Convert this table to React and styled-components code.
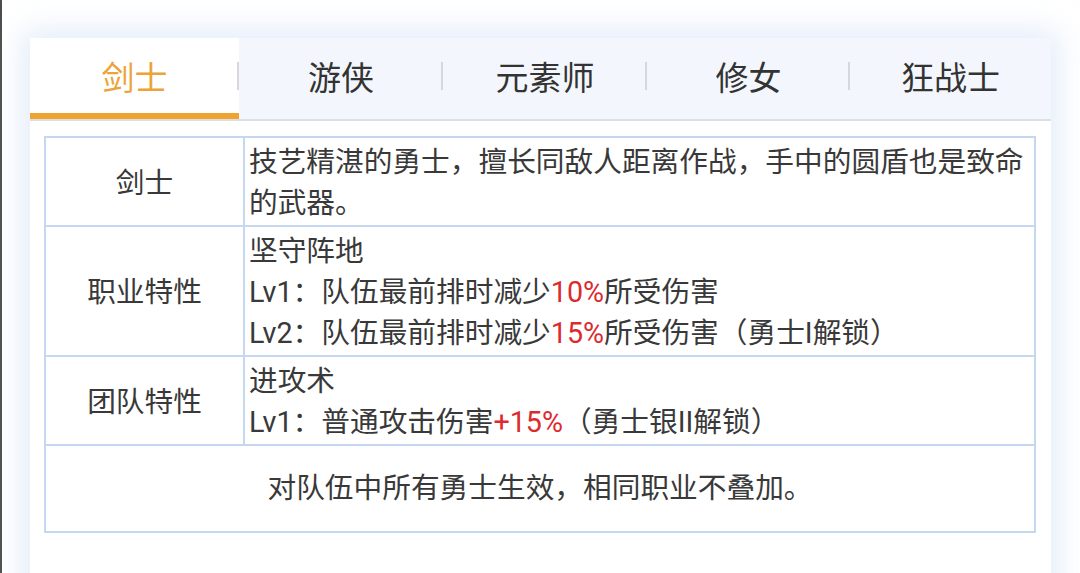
import React, { useState } from "react";
import styled, { createGlobalStyle, css } from "styled-components";

const GlobalStyle = createGlobalStyle`
  html, body {
    margin: 0;
    padding: 0;
    background: #ffffff;
  }
  body {
    font-family: Roboto, "Noto Sans CJK SC", "Noto Sans", sans-serif;
    overflow: hidden;
  }
`;

const Page = styled.div`
  min-height: 100vh;
  box-sizing: border-box;
  border-left: 2px solid #4d4d4d;
  padding: 38px 29px 0 28px;
  background: #ffffff;
`;

const Card = styled.div`
  background: #ffffff;
  min-height: 600px;
  box-shadow: 0 0 28px 8px rgba(205, 222, 246, 0.55);
`;

const TabBar = styled.div`
  display: grid;
  grid-template-columns: 209px 204px 204px 203px 1fr;
  background: #f3f7fd;
  border-bottom: 2px solid #dcdfe4;
`;

const Tab = styled.button`
  position: relative;
  height: 81px;
  margin: 0;
  padding: 0;
  border: none;
  border-bottom: 6px solid transparent;
  background: transparent;
  font-family: "Noto Sans CJK SC", sans-serif;
  font-size: 33px;
  color: #333333;
  cursor: pointer;
  display: flex;
  align-items: center;
  justify-content: center;

  ${(p) =>
    p.$active &&
    css`
      background: #ffffff;
      color: #eca43a;
      border-bottom-color: #efa42f;
    `}

  ${(p) =>
    !p.$last &&
    css`
      &::after {
        content: "";
        position: absolute;
        right: 0;
        top: 24px;
        width: 2px;
        height: 28px;
        background: #d6d8dc;
      }
    `}
`;

const Table = styled.table`
  margin: 15px 15px 0 14px;
  width: calc(100% - 29px);
  table-layout: fixed;
  border-collapse: collapse;
  font-family: Roboto, "Noto Sans CJK SC", sans-serif;
  font-size: 28.7px;
  line-height: 41px;
  color: #393939;
`;

const HeadCol = styled.col`
  width: 199px;
`;

const cellBase = css`
  border: 2px solid #c6d8ef;
`;

const HeadCell = styled.td`
  ${cellBase};
  text-align: center;
  vertical-align: middle;
  padding: 4px 2px 1px;
`;

const BodyCell = styled.td`
  ${cellBase};
  text-align: left;
  vertical-align: top;
  padding: 4px 1px 1px 4px;
`;

const NoteCell = styled.td`
  ${cellBase};
  text-align: center;
  padding: 22px 4px 22px;
`;

const Line = styled.div``;

const Red = styled.span`
  color: #dd2a2e;
`;

const tabs = ["剑士", "游侠", "元素师", "修女", "狂战士"];

export default function App() {
  const [active, setActive] = useState(0);
  return (
    <>
      <GlobalStyle />
      <Page>
        <Card>
          <TabBar>
            {tabs.map((t, i) => (
              <Tab
                key={t}
                $active={i === active}
                $last={i === tabs.length - 1}
                onClick={() => setActive(i)}
              >
                {t}
              </Tab>
            ))}
          </TabBar>
          <Table>
            <colgroup>
              <HeadCol />
              <col />
            </colgroup>
            <tbody>
              <tr>
                <HeadCell>剑士</HeadCell>
                <BodyCell>
                  技艺精湛的勇士，擅长同敌人距离作战，手中的圆盾也是致命的武器。
                </BodyCell>
              </tr>
              <tr>
                <HeadCell>职业特性</HeadCell>
                <BodyCell>
                  <Line>坚守阵地</Line>
                  <Line>
                    Lv1：队伍最前排时减少<Red>10%</Red>所受伤害
                  </Line>
                  <Line>
                    Lv2：队伍最前排时减少<Red>15%</Red>所受伤害（勇士I解锁）
                  </Line>
                </BodyCell>
              </tr>
              <tr>
                <HeadCell>团队特性</HeadCell>
                <BodyCell>
                  <Line>进攻术</Line>
                  <Line>
                    Lv1：普通攻击伤害<Red>+15%</Red>（勇士银II解锁）
                  </Line>
                </BodyCell>
              </tr>
              <tr>
                <NoteCell colSpan={2}>对队伍中所有勇士生效，相同职业不叠加。</NoteCell>
              </tr>
            </tbody>
          </Table>
        </Card>
      </Page>
    </>
  );
}
